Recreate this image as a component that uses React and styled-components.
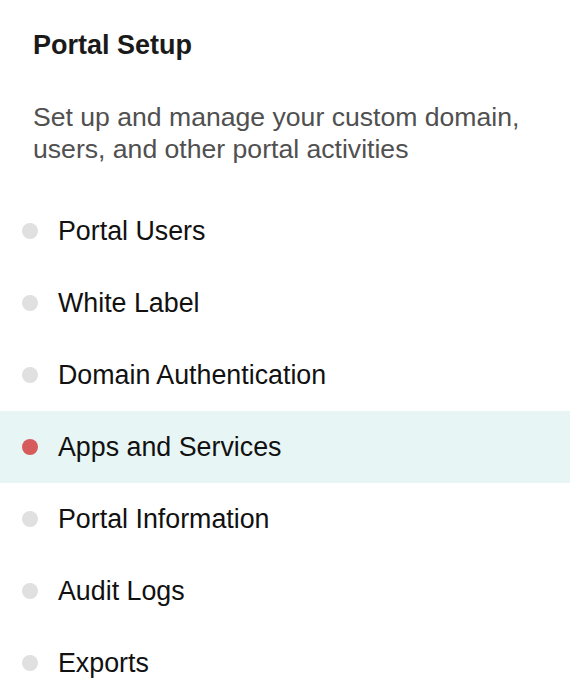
import React from "react";
import styled, { createGlobalStyle } from "styled-components";

const Global = createGlobalStyle`
  html, body { margin: 0; padding: 0; background: #fff; }
  body { font-family: "Liberation Sans", Arial, Helvetica, sans-serif; -webkit-font-smoothing: antialiased; }
`;

const Panel = styled.div`
  width: 570px;
  height: 696px;
  overflow: hidden;
  background: #fff;
`;

const Header = styled.div`
  padding: 30px 33px 0 33px;
`;

const Title = styled.h2`
  margin: 0;
  font-size: 27px;
  line-height: 30px;
  font-weight: 700;
  color: #1a1a1a;
`;

const Description = styled.p`
  margin: 41px 0 0 0;
  font-size: 26.6px;
  line-height: 32px;
  color: #505050;
`;

const List = styled.ul`
  list-style: none;
  margin: 30px 0 0 0;
  padding: 0;
`;

const Item = styled.li`
  display: flex;
  align-items: center;
  gap: 20px;
  height: 72px;
  padding-left: 22px;
  background: ${(p) => (p.$active ? "#e8f5f5" : "transparent")};
  font-size: 26.8px;
  color: #111;
`;

const Dot = styled.span`
  flex: none;
  width: 16px;
  height: 16px;
  border-radius: 50%;
  background: ${(p) => (p.$active ? "#d65c5c" : "#e0e0e0")};
`;

const items = [
  "Portal Users",
  "White Label",
  "Domain Authentication",
  "Apps and Services",
  "Portal Information",
  "Audit Logs",
  "Exports",
];

export default function App() {
  return (
    <>
      <Global />
      <Panel>
        <Header>
          <Title>Portal Setup</Title>
          <Description>
            Set up and manage your custom domain,
            <br />
            users, and other portal activities
          </Description>
        </Header>
        <List>
          {items.map((t) => (
            <Item key={t} $active={t === "Apps and Services"}>
              <Dot $active={t === "Apps and Services"} />
              {t}
            </Item>
          ))}
        </List>
      </Panel>
    </>
  );
}
